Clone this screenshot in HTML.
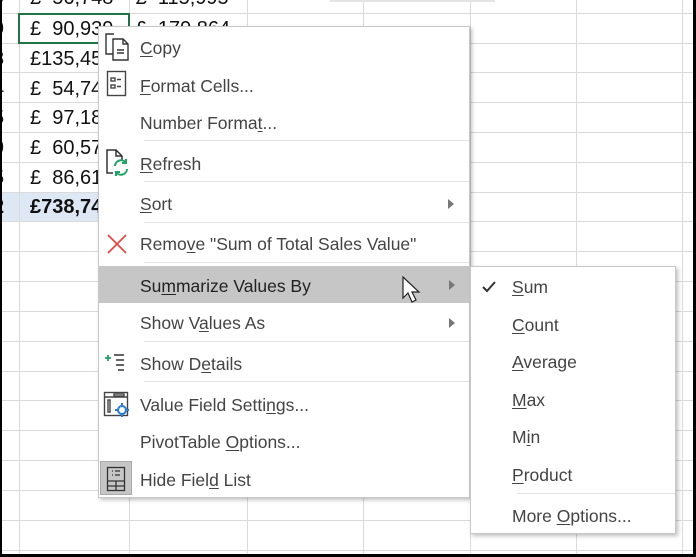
<!DOCTYPE html>
<html><head><meta charset="utf-8"><style>
*{margin:0;padding:0;box-sizing:border-box}
body{width:696px;height:557px;overflow:hidden;background:#fff;position:relative;font-family:"Liberation Sans",sans-serif}
.a{position:absolute}
.h{position:absolute;height:1px;background:#dadada}
.v{position:absolute;width:1px;background:#dadada}
.c{position:absolute;font-size:20px;color:#111;white-space:pre;line-height:30px}
.menu{position:absolute;background:#fff;border:1px solid #c8c8c8;box-shadow:2px 2px 4px rgba(0,0,0,.25)}
.t{position:absolute;font-size:17.5px;color:#444;white-space:pre;line-height:22px}
.sep{position:absolute;height:1px;background:#e3e3e3}
u{text-decoration:underline;text-underline-offset:2px}
.arr{position:absolute;width:0;height:0;border-top:5px solid transparent;border-bottom:5px solid transparent;border-left:6px solid #777}
</style></head><body>
<div class="a" style="left:0;top:192px;width:363px;height:29px;background:#dde8f4"></div>
<div class="h" style="left:0;top:13px;width:696px"></div>
<div class="h" style="left:0;top:43px;width:696px"></div>
<div class="h" style="left:0;top:72px;width:696px"></div>
<div class="h" style="left:0;top:102px;width:696px"></div>
<div class="h" style="left:0;top:132px;width:696px"></div>
<div class="h" style="left:0;top:162px;width:696px"></div>
<div class="h" style="left:0;top:192px;width:696px"></div>
<div class="h" style="left:0;top:221px;width:696px"></div>
<div class="h" style="left:0;top:251px;width:696px"></div>
<div class="h" style="left:0;top:281px;width:696px"></div>
<div class="h" style="left:0;top:311px;width:696px"></div>
<div class="h" style="left:0;top:341px;width:696px"></div>
<div class="h" style="left:0;top:371px;width:696px"></div>
<div class="h" style="left:0;top:400px;width:696px"></div>
<div class="h" style="left:0;top:430px;width:696px"></div>
<div class="h" style="left:0;top:460px;width:696px"></div>
<div class="h" style="left:0;top:490px;width:696px"></div>
<div class="h" style="left:0;top:520px;width:696px"></div>
<div class="h" style="left:0;top:550px;width:696px"></div>
<div class="v" style="left:19px;top:0;height:557px"></div>
<div class="v" style="left:129px;top:0;height:557px"></div>
<div class="v" style="left:247px;top:0;height:557px"></div>
<div class="v" style="left:363px;top:0;height:557px"></div>
<div class="v" style="left:470px;top:0;height:557px"></div>
<div class="v" style="left:576px;top:0;height:557px"></div>
<div class="v" style="left:682px;top:0;height:557px"></div>
<div class="a" style="left:330px;top:0;width:165px;height:2px;background:#e4e4e4"></div>
<!-- cell text -->
<div class="c" style="left:-7px;top:-17px">9</div><div class="c" style="left:30px;top:-17px">£  56,748    £  115,995</div>
<div class="c" style="left:-7px;top:14px">9</div><div class="c" style="left:30px;top:14px">£  90,939    £  179,864</div>
<div class="c" style="left:-7px;top:44px">3</div><div class="c" style="left:30px;top:44px">£135,45</div>
<div class="c" style="left:-7px;top:74px">4</div><div class="c" style="left:30px;top:74px">£  54,74</div>
<div class="c" style="left:-7px;top:103px">5</div><div class="c" style="left:30px;top:103px">£  97,18</div>
<div class="c" style="left:-7px;top:133px">9</div><div class="c" style="left:30px;top:133px">£  60,57</div>
<div class="c" style="left:-7px;top:163px">5</div><div class="c" style="left:30px;top:163px">£  86,61</div>
<div class="c" style="left:-7px;top:192px;font-weight:bold">2</div><div class="c" style="left:30px;top:192px;font-weight:bold">£738,74</div>
<div class="a" style="left:18px;top:13px;width:112px;height:31px;border:2px solid #217346"></div>

<div class="menu" style="left:98px;top:26px;width:372px;height:472px"></div>
<div class="a" style="left:99px;top:266px;width:370px;height:37px;background:#c6c6c6"></div>
<div class="a" style="left:100px;top:461px;width:32px;height:34px;background:#c6c6c6;border:1px solid #aaa"></div>

<div class="t" style="left:140px;top:37px"><u>C</u>opy</div>
<div class="t" style="left:140px;top:75px"><u>F</u>ormat Cells...</div>
<div class="t" style="left:140px;top:112px">Number Forma<u>t</u>...</div>
<div class="sep" style="left:144px;top:140px;width:325px"></div>
<div class="t" style="left:140px;top:153px"><u>R</u>efresh</div>
<div class="sep" style="left:144px;top:181px;width:325px"></div>
<div class="t" style="left:140px;top:193px"><u>S</u>ort</div>
<div class="arr" style="left:448px;top:199px"></div>
<div class="sep" style="left:144px;top:222px;width:325px"></div>
<div class="t" style="left:140px;top:233px">Remo<u>v</u>e "Sum of Total Sales Value"</div>
<div class="sep" style="left:144px;top:262px;width:325px"></div>
<div class="t" style="left:140px;top:275px;color:#222">Su<u>m</u>marize Values By</div>
<div class="arr" style="left:449px;top:280px"></div>
<div class="t" style="left:140px;top:312px">Show V<u>a</u>lues As</div>
<div class="arr" style="left:449px;top:318px"></div>
<div class="sep" style="left:144px;top:341px;width:325px"></div>
<div class="t" style="left:140px;top:353px">Show D<u>e</u>tails</div>
<div class="sep" style="left:144px;top:381px;width:325px"></div>
<div class="t" style="left:140px;top:394px">Value Field Setti<u>n</u>gs...</div>
<div class="t" style="left:140px;top:431px">PivotTable <u>O</u>ptions...</div>
<div class="t" style="left:140px;top:469px">Hide Fiel<u>d</u> List</div>

<svg class="a" style="left:104px;top:32px" width="28" height="30" viewBox="0 0 28 30" fill="none" stroke="#333" stroke-width="1.4">
<path d="M9 22H2V2h8"/><path d="M9 7h10l5 5v16H9z"/><path d="M19 7v5h5"/><path d="M13 18h7M13 21h7"/></svg>
<svg class="a" style="left:106px;top:70px" width="22" height="28" viewBox="0 0 22 28" fill="none" stroke="#444" stroke-width="1.4">
<rect x="1.5" y="1.5" width="18" height="24"/><rect x="5" y="8" width="4" height="3"/><rect x="5" y="15" width="4" height="3"/><path d="M11 9.5h4M11 16.5h4"/></svg>
<svg class="a" style="left:105px;top:148px" width="28" height="30" viewBox="0 0 28 30" fill="none" stroke-width="1.5">
<path d="M8 25H2V2h9l6 6v5" stroke="#333"/><path d="M11 2v6h6" stroke="#333"/>
<path d="M10 18a6 6 0 0 1 11-3M22 21a6 6 0 0 1-11 3" stroke="#21a366" stroke-width="2"/><path d="M21 11v4h-4M11 28v-4h4" stroke="#21a366" stroke-width="2"/></svg>
<svg class="a" style="left:106px;top:233px" width="22" height="22" viewBox="0 0 22 22" stroke="#e8413a" stroke-width="1.6"><path d="M2 2l18 18M20 2L2 20"/></svg>
<svg class="a" style="left:104px;top:352px" width="24" height="24" viewBox="0 0 24 24" fill="none" stroke-width="1.5">
<path d="M1 6h6M4 3v6" stroke="#21a366" stroke-width="1.8"/><path d="M10 3h10M12 8h8M12 13h8M14 18h6" stroke="#333"/></svg>
<svg class="a" style="left:103px;top:391px" width="28" height="28" viewBox="0 0 28 28" fill="none" stroke-width="1.4">
<rect x="1.5" y="1.5" width="23" height="23" stroke="#444"/><path d="M1.5 6h23M5 9v12h2V9z" stroke="#444"/><rect x="11" y="3" width="10" height="2" stroke="#444"/>
<circle cx="19" cy="19" r="4" stroke="#2b7cd3" stroke-width="2"/><path d="M19 12v3M19 23v3M12 19h3M23 19h3" stroke="#2b7cd3" stroke-width="2"/></svg>
<svg class="a" style="left:106px;top:466px" width="20" height="26" viewBox="0 0 20 26" fill="none" stroke="#333" stroke-width="1.3">
<rect x="1.5" y="1.5" width="17" height="23"/><path d="M1.5 15h17M1.5 20h17M10 15v10M6 5h1M6 9h1M9 5h5M9 9h5"/></svg>
<svg class="a" style="left:402px;top:276px" width="22" height="30" viewBox="0 0 22 30"><path d="M1 1v21l5-5 4 9 4-2-4-8h7z" fill="#fff" stroke="#222" stroke-width="1.2"/></svg>

<div class="menu" style="left:470px;top:266px;width:206px;height:268px"></div>
<svg class="a" style="left:482px;top:280px" width="14" height="14" viewBox="0 0 14 14" fill="none" stroke="#333" stroke-width="2"><path d="M1 7l4 4 8-9"/></svg>
<div class="t" style="left:512px;top:276px"><u>S</u>um</div>
<div class="t" style="left:512px;top:314px"><u>C</u>ount</div>
<div class="t" style="left:512px;top:351px"><u>A</u>verage</div>
<div class="t" style="left:512px;top:389px"><u>M</u>ax</div>
<div class="t" style="left:512px;top:426px">M<u>i</u>n</div>
<div class="t" style="left:512px;top:464px"><u>P</u>roduct</div>
<div class="sep" style="left:517px;top:493px;width:158px"></div>
<div class="t" style="left:512px;top:505px">More <u>O</u>ptions...</div>

<div class="a" style="left:0;top:0;width:2px;height:557px;background:#000"></div>
<div class="a" style="left:693px;top:0;width:3px;height:557px;background:#000"></div>
<div class="a" style="left:0;top:554px;width:696px;height:3px;background:#000"></div>
</body></html>
